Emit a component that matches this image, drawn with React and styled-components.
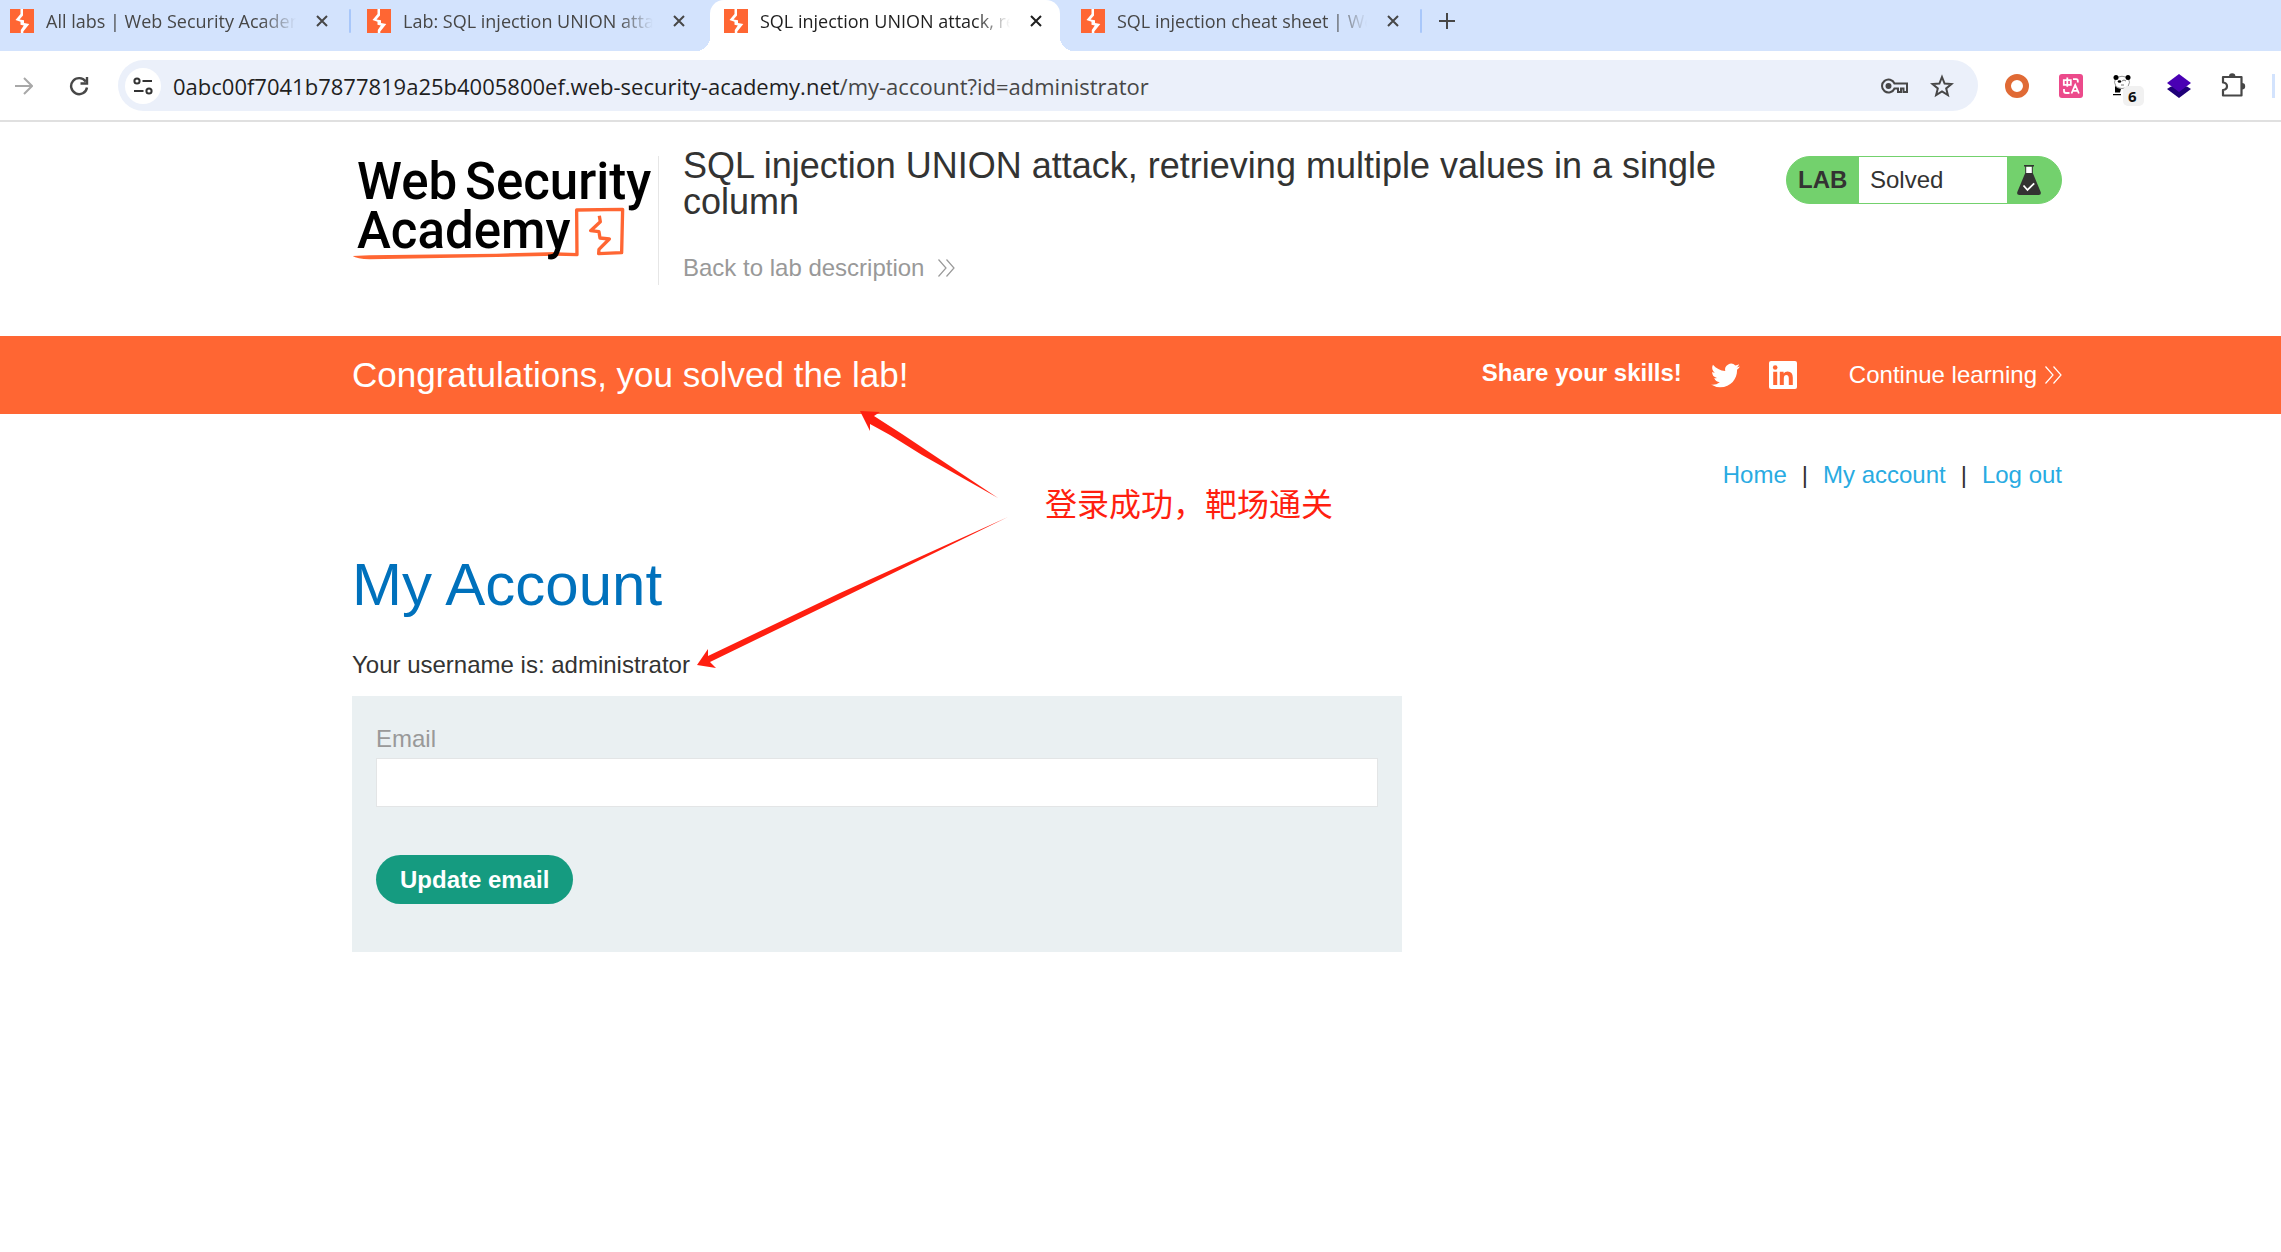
import { Fragment } from 'react';
import styled, { createGlobalStyle } from 'styled-components';

const GlobalStyle = createGlobalStyle`
   * {
      box-sizing: border-box;
   }

   body {
      margin: 0;
      background: #fff;
      color: #333332;
      font-family: 'Liberation Sans', Arial, 'Noto Sans CJK SC', sans-serif;
      font-size: 24px;
      line-height: 28px;
   }

   h1, h2, p {
      margin: 0;
      font-weight: 400;
   }

   a {
      color: inherit;
      text-decoration: none;
   }

   button {
      padding: 0;
      border: 0;
      background: none;
      color: inherit;
      cursor: pointer;
   }

   svg {
      display: block;
      flex: none;
   }
`;

/* Browser chrome */

const TabStrip = styled.div`
   display: flex;
   height: 51px;
   margin-left: -4px;
   background: #d3e3fd;
   font-family: 'Open Sans', 'Noto Sans', sans-serif;
   font-size: 18px;
   overflow: hidden;
`;

const Tab = styled.div`
   position: relative;
   display: flex;
   align-items: center;
   width: 350px;
   padding: 0 12px 9px 14px;
   color: ${(p) => (p.$active ? '#1f1f1f' : '#474747')};
   background: ${(p) => (p.$active ? '#fff' : 'transparent')};
   border-radius: 14px 14px 0 0;

   &::before,
   &::after {
      content: '';
      display: ${(p) => (p.$active ? 'block' : 'none')};
      position: absolute;
      bottom: 0;
      width: 14px;
      height: 14px;
   }

   &::before {
      right: 100%;
      background: radial-gradient(circle at 0 0, transparent 14px, #fff 14px);
   }

   &::after {
      left: 100%;
      background: radial-gradient(circle at 100% 0, transparent 14px, #fff 14px);
   }
`;

const TabTitle = styled.span`
   flex: 1;
   margin: 0 14px 0 12px;
   overflow: hidden;
   white-space: nowrap;
   mask-image: linear-gradient(to right, #000 86%, transparent);
`;

const TabButton = styled.button`
   display: grid;
   place-items: center;
   width: 24px;
   height: 24px;
`;

const TabGap = styled.div`
   width: 7px;
   padding: 9px 2px 0 3px;

   &::after {
      content: '';
      display: ${(p) => (p.$line ? 'block' : 'none')};
      height: 24px;
      border-radius: 1px;
      background: #a8c7fa;
   }
`;

const NewTab = styled(TabButton)`
   margin: 9px 0 0 11px;
   color: #474747;
`;

const Toolbar = styled.div`
   display: flex;
   align-items: center;
   height: 71px;
   padding: 0 6px 0 12px;
   border-bottom: 2px solid #e0e0e0;
   color: #474747;
`;

const ToolButton = styled.button`
   display: grid;
   place-items: center;
   width: 54px;
   height: 42px;
`;

const BackButtons = styled.div`
   display: flex;
   align-items: center;
   gap: 16px;
   margin-right: 12px;
`;

const AddressBar = styled.div`
   display: flex;
   flex: 1;
   align-items: center;
   height: 51px;
   margin-right: 12px;
   padding: 0 12px 0 7px;
   border-radius: 26px;
   background: #ebf0fa;
`;

const SiteInfo = styled(ToolButton)`
   width: 36px;
   height: 36px;
   border-radius: 18px;
   background: #fff;
`;

const Url = styled.div`
   flex: 1;
   margin-left: 12px;
   font-family: 'Open Sans', 'Noto Sans', sans-serif;
   font-size: 22px;
   white-space: nowrap;

   strong {
      font-weight: 400;
      color: #1f1f1f;
   }
`;

const AddressAction = styled(ToolButton)`
   width: 48px;
`;

const ToolbarEnd = styled.div`
   width: 3px;
   height: 24px;
   margin-left: 12px;
   background: #d3e3fd;
`;

/* Lab page */

const LabPage = styled.div`
   position: relative;
`;

const Container = styled.div`
   padding: 0 219px 0 352px;
`;

const Header = styled(Container)`
   display: flex;
   align-items: flex-start;
   padding-top: 26px;
   padding-bottom: 51px;
`;

const LogoLink = styled.a`
   flex: none;
   height: 129px;
   margin: 8px 24px 0 0;
   padding-right: 6px;
   border-right: 1px solid #e6e6e6;
`;

const TitleBlock = styled.div`
   flex: 1;
   margin-right: 24px;
`;

const LabTitle = styled.h2`
   font-size: 36px;
   line-height: 36px;
`;

const BackLink = styled.a`
   display: inline-flex;
   align-items: center;
   gap: 14px;
   margin-top: 34px;
   color: #999;
`;

const LabStatus = styled.div`
   display: flex;
   align-items: center;
   width: 276px;
   height: 48px;
   margin-top: 8px;
   border: 1px solid #73d16d;
   border-radius: 24px;
   background: #73d16d;
   overflow: hidden;

   strong {
      width: 72px;
      padding-left: 11px;
   }

   p {
      flex: 1;
      height: 46px;
      padding-left: 11px;
      background: #fff;
      line-height: 46px;
   }
`;

const FlaskCell = styled.div`
   width: 54px;
   padding-left: 10px;
`;

const Banner = styled(Container)`
   display: flex;
   align-items: center;
   height: 78px;
   background: #ff6633;
   color: #fff;
`;

const BannerTitle = styled.p`
   flex: 1;
   font-size: 35px;
   line-height: 40px;
`;

const Share = styled.div`
   display: flex;
   align-items: center;
   gap: 29px;
   margin-right: 52px;

   strong {
      padding-bottom: 4px;
   }
`;

const ContinueLink = styled.a`
   display: flex;
   align-items: center;
   gap: 8px;
`;

const Nav = styled.nav`
   display: flex;
   justify-content: flex-end;
   gap: 15px;
   padding-top: 47px;

   a {
      color: #29abe2;
   }
`;

const PageTitle = styled.h1`
   margin-top: 66px;
   color: #0071bc;
   font-size: 60px;
   line-height: 60px;
`;

const Username = styled.p`
   margin: 36px 0 17px;
`;

const EmailForm = styled.form`
   max-width: 1050px;
   padding: 29px 24px 48px;
   background: #eaf0f2;

   label {
      display: block;
      color: #999;
   }

   input {
      display: block;
      width: 100%;
      height: 49px;
      margin: 5px 0 48px;
      padding: 0 12px;
      border: 1px solid #e3e5e6;
      font: inherit;
   }
`;

const SubmitButton = styled.button`
   height: 49px;
   padding: 0 24px;
   border-radius: 25px;
   background: #159b80;
   color: #fff;
   font: bold 24px/28px 'Liberation Sans', Arial, sans-serif;
`;

/* Notes drawn over the page */

const Arrows = styled.svg`
   position: absolute;
   top: 280px;
   left: 690px;
   pointer-events: none;
`;

const Note = styled.p`
   position: absolute;
   top: 360px;
   left: 1045px;
   color: #ff1f10;
   font-family: 'Noto Sans CJK SC', sans-serif;
   font-size: 32px;
   line-height: 40px;
`;

const tabs = [
   { title: 'All labs | Web Security Academy', line: true },
   { title: 'Lab: SQL injection UNION attack' },
   { title: 'SQL injection UNION attack, retrieving', active: true },
   { title: 'SQL injection cheat sheet | Web Security', line: true },
];

const Favicon = () => (
   <svg width="24" height="24" viewBox="0 0 24 24">
      <path fill="#ff6633" d="M0 0h24v24H0z" />
      <path
         fill="#fff"
         d="M10.500 0h2.500v6.500l-3.500 4 4.500.8v2.700l5.300 1-6 7.500V24h-2.500v-3l3-4.500-3.300-.8v-2.900L5.500 11l5-6z"
      />
   </svg>
);

const CloseIcon = () => (
   <svg width="12" height="12" viewBox="0 0 12 12" stroke="currentColor" strokeWidth="2">
      <path d="M1 1l10 10M11 1L1 11" />
   </svg>
);

const Chevrons = () => (
   <svg width="17" height="18" viewBox="0 0 17 18" fill="none" stroke="currentColor" strokeWidth="1.200">
      <path d="M.5.5L8 9 .5 17.500M8.500.5L16 9l-7.500 8.500" />
   </svg>
);

const ForwardIcon = () => (
   <svg width="18" height="18" viewBox="0 0 18 18" fill="none" stroke="#a8a8a8" strokeWidth="2">
      <path d="M0 9h16M9 1l8 8-8 8" />
   </svg>
);

const ReloadIcon = () => (
   <svg width="20" height="20" viewBox="0 0 20 20" fill="none" stroke="#474747" strokeWidth="2.400">
      <path d="M16.700 5.600A8 8 0 1 0 18 11.500M18 1v6.500h-6.500" />
   </svg>
);

const TuneIcon = () => (
   <svg width="20" height="18" viewBox="0 0 20 18" fill="none" stroke="#333" strokeWidth="2">
      <circle cx="4" cy="4" r="2.600" />
      <circle cx="16" cy="14" r="2.600" />
      <path d="M9.500 4H19M1 14h9.500" />
   </svg>
);

const KeyIcon = () => (
   <svg width="27" height="16" viewBox="0 0 27 16" fill="none" stroke="#474747" strokeWidth="2">
      <path d="M13.500 5.500H26v8.500h-3.500v-3.500h-2.500V14h-3v-3.500h-3.500A6.500 6.500 0 1 1 13.500 5.500z" />
      <circle cx="7.500" cy="8" r="2" fill="#474747" />
   </svg>
);

const StarIcon = () => (
   <svg width="24" height="24" viewBox="0 0 24 24" fill="none" stroke="#474747" strokeWidth="2">
      <path d="M12 3l2.600 6.500 6.900.5-5.300 4.400 1.700 6.800-5.900-3.700-5.900 3.700 1.700-6.800L2.500 10l6.900-.5z" />
   </svg>
);

const RingIcon = () => (
   <svg width="24" height="24" viewBox="0 0 24 24">
      <circle cx="12" cy="12" r="9" fill="none" stroke="#e06a35" strokeWidth="6" />
   </svg>
);

const TranslateIcon = () => (
   <svg width="24" height="24" viewBox="0 0 24 24" fill="none" stroke="#fff" strokeWidth="1.800">
      <rect width="24" height="24" rx="3" fill="#ec4a8b" stroke="none" />
      <path d="M4.800 6.200h7v4.600h-7zM8.300 3.600v9.200M14 5.200h3.200q1.600 0 1.600 1.600v1.600M5 15v2q0 2 2 2h3.500M12.500 19.500l3.700-8.500 3.700 8.500M13.500 16.800h5.400" />
   </svg>
);

const PandaIcon = () => (
   <svg width="38" height="42" viewBox="0 0 38 42">
      <path fill="#fff" stroke="#777" strokeWidth=".8" d="M10 12.500q6-2.500 12 0 3 5 0 9-6 4-12 0-3-4 0-9z" />
      <circle cx="10" cy="12.500" r="2.500" />
      <circle cx="22" cy="12.500" r="2.500" />
      <ellipse cx="13.500" cy="16.500" rx="1.800" ry="1.200" />
      <path fill="none" stroke="#555" strokeWidth=".8" d="M16 16q2-2 4 0M15 20h3" />
      <path d="M9 21q2 2.500 6 3l-1 3.500H9zM7 29h8v1.200H7z" />
      <rect x="17" y="21" width="21" height="20" rx="5" fill="#f1f1f1" />
      <text x="22" y="37" fontFamily="Open Sans" fontSize="15" fontWeight="700" fill="#111">6</text>
   </svg>
);

const LayersIcon = () => (
   <svg width="24" height="24" viewBox="0 0 24 24">
      <path fill="#1f0078" d="M0 15l4-2.600h16l4 2.600-12 9z" />
      <path fill="#4a00b4" d="M12 0l12 9-12 9L0 9z" />
   </svg>
);

const PuzzleIcon = () => (
   <svg width="25" height="25" viewBox="0 0 25 25" fill="none" stroke="#474747" strokeWidth="2.200">
      <path strokeLinejoin="round" d="M2 4h18.500v18.500H2v-5.500q4-.5 4-3.800T2 9.500z" />
      <path fill="#474747" stroke="none" d="M8 3.500a3.200 3.200 0 0 1 6.400 0zM21 10a3.200 3.200 0 0 1 0 6.400z" />
   </svg>
);

const FlaskIcon = () => (
   <svg width="24" height="30" viewBox="0 0 24 30">
      <path fill="#fff" d="M9 2h6v6H9z" />
      <path fill="#333332" d="M7 0h10v1.500h-1.200V8l7.900 19q.8 3-2 3H2.300q-2.800 0-2-3l7.900-19V1.500H7zm2.200 1.500V8h5.600V1.500z" />
      <path fill="none" stroke="#fff" strokeWidth="1.800" d="M6.500 20.500l4 4.500 6.700-6.700" />
   </svg>
);

const TwitterIcon = () => (
   <svg width="29" height="29" viewBox="0 0 24 24" fill="#fff">
      <path d="M23.950 4.570a10 10 0 0 1-2.820.770 4.960 4.960 0 0 0 2.160-2.720c-.95.560-2 .960-3.130 1.180a4.920 4.920 0 0 0-8.380 4.480C7.690 8.090 4.070 6.130 1.640 3.160a4.820 4.820 0 0 0-.67 2.480c0 1.710.870 3.210 2.190 4.100a4.900 4.900 0 0 1-2.230-.620v.060a4.920 4.920 0 0 0 3.950 4.830 5 5 0 0 1-2.210.080 4.940 4.940 0 0 0 4.600 3.420A9.870 9.870 0 0 1 0 19.540a13.990 13.990 0 0 0 7.560 2.210c9.050 0 14-7.500 14-13.980 0-.210 0-.420-.020-.630a9.940 9.940 0 0 0 2.460-2.550z" />
   </svg>
);

const LinkedinIcon = () => (
   <svg width="28" height="28" viewBox="0 0 28 28">
      <rect width="28" height="28" rx="2" fill="#fff" />
      <g fill="#ff6633">
         <circle cx="6.200" cy="6.500" r="2.300" />
         <path d="M4.200 10.800h4V24h-4zM10.800 10.800h3.800v1.800q1.300-2.100 4-2.100 5.200 0 5.200 6V24h-4v-6.500q0-3.500-2.400-3.500-2.600 0-2.600 3.400V24h-4z" />
      </g>
   </svg>
);

const AcademyLogo = () => (
   <svg width="300" height="110" viewBox="0 0 300 110" role="img" aria-label="Web Security Academy">
      {/* hand-drawn underline that runs into the box */}
      <g transform="translate(-12 -26) scale(.3333)">
         <path fill="#ff6633" d="M38 378l50-2 382-5 180-5v11l-180 4-380 7q-40-2-52-10z" />
         <path
            fill="none"
            stroke="#ff6633"
            strokeWidth="10"
            strokeLinejoin="round"
            d="M646 372l65 2-1-134 138-2-3 130-69 3 1-13 31-31-28-3-3-19-25-3 29-27-3-18"
         />
      </g>
      <g fontFamily="Roboto, sans-serif" fontSize="51" fontWeight="500" fill="#000">
         <text x="5" y="43">Web</text>
         <text x="113" y="43">Security</text>
         <text x="5" y="92">Academy</text>
      </g>
   </svg>
);

function App() {
   return (
      <>
         <GlobalStyle />

         <TabStrip>
            {tabs.map((tab) => (
               <Fragment key={tab.title}>
                  <Tab $active={tab.active}>
                     <Favicon />
                     <TabTitle>{tab.title}</TabTitle>
                     <TabButton aria-label="Close tab">
                        <CloseIcon />
                     </TabButton>
                  </Tab>
                  <TabGap $line={tab.line} />
               </Fragment>
            ))}
            <NewTab aria-label="New tab">
               <svg width="16" height="16" viewBox="0 0 16 16" stroke="currentColor" strokeWidth="2">
                  <path d="M8 0v16M0 8h16" />
               </svg>
            </NewTab>
         </TabStrip>

         <Toolbar>
            <BackButtons>
               <TabButton aria-label="Forward">
                  <ForwardIcon />
               </TabButton>
               <ToolButton aria-label="Reload">
                  <ReloadIcon />
               </ToolButton>
            </BackButtons>
            <AddressBar>
               <SiteInfo aria-label="Site information">
                  <TuneIcon />
               </SiteInfo>
               <Url>
                  <strong>0abc00f7041b7877819a25b4005800ef.web-security-academy.net</strong>
                  /my-account?id=administrator
               </Url>
               <AddressAction aria-label="Passwords">
                  <KeyIcon />
               </AddressAction>
               <AddressAction aria-label="Bookmark">
                  <StarIcon />
               </AddressAction>
            </AddressBar>
            <ToolButton aria-label="Ring extension">
               <RingIcon />
            </ToolButton>
            <ToolButton aria-label="Translate">
               <TranslateIcon />
            </ToolButton>
            <ToolButton aria-label="Panda extension">
               <PandaIcon />
            </ToolButton>
            <ToolButton aria-label="Layers extension">
               <LayersIcon />
            </ToolButton>
            <ToolButton aria-label="Extensions">
               <PuzzleIcon />
            </ToolButton>
            <ToolbarEnd />
         </Toolbar>

         <LabPage>
            <Header as="header">
               <LogoLink href="#academy">
                  <AcademyLogo />
               </LogoLink>
               <TitleBlock>
                  <LabTitle>
                     SQL injection UNION attack, retrieving multiple values in a single column
                  </LabTitle>
                  <BackLink href="#description">
                     Back to lab description
                     <Chevrons />
                  </BackLink>
               </TitleBlock>
               <LabStatus>
                  <strong>LAB</strong>
                  <p>Solved</p>
                  <FlaskCell>
                     <FlaskIcon />
                  </FlaskCell>
               </LabStatus>
            </Header>

            <Banner>
               <BannerTitle>Congratulations, you solved the lab!</BannerTitle>
               <Share>
                  <strong>Share your skills!</strong>
                  <a href="#twitter" aria-label="Twitter">
                     <TwitterIcon />
                  </a>
                  <a href="#linkedin" aria-label="LinkedIn">
                     <LinkedinIcon />
                  </a>
               </Share>
               <ContinueLink href="#continue">
                  Continue learning
                  <Chevrons />
               </ContinueLink>
            </Banner>

            <Container as="main">
               <Nav>
                  <a href="#home">Home</a>
                  <span>|</span>
                  <a href="#account">My account</a>
                  <span>|</span>
                  <a href="#logout">Log out</a>
               </Nav>

               <PageTitle>My Account</PageTitle>
               <Username>Your username is: administrator</Username>

               <EmailForm>
                  <label htmlFor="email">Email</label>
                  <input id="email" type="email" />
                  <SubmitButton type="button">Update email</SubmitButton>
               </EmailForm>
            </Container>

            <Arrows width="330" height="280" viewBox="0 0 330 280" fill="#ff1f10">
               <path d="M170 9l20 1-6 4 28 18 33 22 63 42-76-43-32-20-20-11v7z" />
               <path d="M7 263l11-16v7l132-63 168-76-168 82-130 63 6 6z" />
            </Arrows>
            <Note>登录成功，靶场通关</Note>
         </LabPage>
      </>
   );
}

export default App;
